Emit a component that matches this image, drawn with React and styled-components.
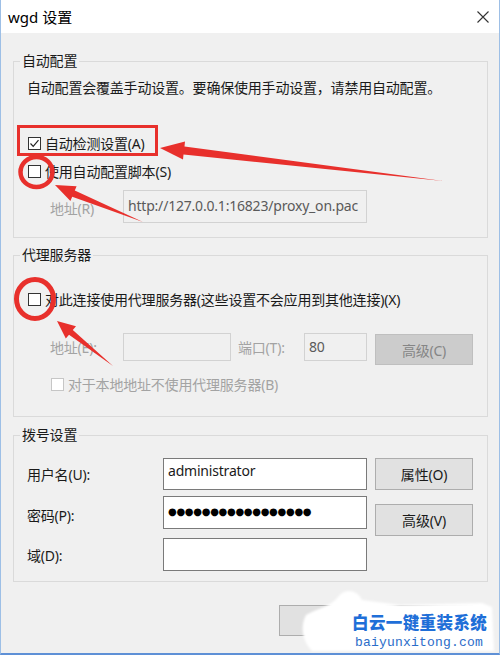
import React from "react";
import styled, { createGlobalStyle } from "styled-components";

const GlobalStyle = createGlobalStyle`
  html, body {
    margin: 0;
    padding: 0;
  }
  body {
    width: 500px;
    height: 655px;
    overflow: hidden;
    background: #fff;
    font-family: "Noto Sans", "Noto Sans CJK SC", sans-serif;
  }
`;

const Window = styled.div`
  position: relative;
  width: 500px;
  height: 655px;
  box-sizing: border-box;
  background: #f0f0f0;
  border: 1px solid #9dbfe6;
  border-top: none;
  border-bottom: 2px solid #5e90d6;
  display: flex;
  flex-direction: column;
  font-size: 14px;
  letter-spacing: -0.2px;
  color: #1a1a1a;
`;

const TitleBar = styled.div`
  height: 33px;
  flex-shrink: 0;
  background: #fff;
  display: flex;
  align-items: center;
  justify-content: space-between;
  padding: 0 10px 0 7px;
`;

const Title = styled.span`
  font-size: 15px;
  letter-spacing: 0;
  color: #000;
`;

const Body = styled.div`
  padding: 20px 11px 0 12px;
  display: flex;
  flex-direction: column;
`;

const Group = styled.fieldset`
  margin: ${(p) => p.$gap}px 0 0;
  padding: 0 10px ${(p) => p.$bottom}px 14px;
  border: 1px solid #dadada;
  min-width: 0;
  display: flex;
  flex-direction: column;
`;

const GroupLabel = styled.legend`
  margin-left: -8px;
  padding: 0 2px;
  line-height: 16px;
  font-size: 14px;
  color: #1a1a1a;
`;

const Note = styled.div`
  margin: 10px 0 0 -1px;
  line-height: 18px;
  color: #1a1a1a;
`;

const CheckRow = styled.div`
  display: flex;
  align-items: center;
  gap: 4px;
  height: 20px;
  margin-top: ${(p) => p.$top}px;
  margin-left: ${(p) => p.$indent || 0}px;
  color: ${(p) => (p.$disabled ? "#a3a3a3" : "#1a1a1a")};
`;

const Box = styled.span`
  width: 13px;
  height: 13px;
  flex-shrink: 0;
  box-sizing: border-box;
  border: 1px solid ${(p) => (p.$disabled ? "#c6c6c6" : "#333")};
  background: #fff;
  display: flex;
  align-items: center;
  justify-content: center;
`;

const FieldRow = styled.div`
  display: flex;
  align-items: ${(p) => p.$align || "center"};
  margin-top: ${(p) => p.$top}px;
  margin-left: ${(p) => p.$indent || 0}px;
`;

const FieldLabel = styled.span`
  width: ${(p) => p.$w}px;
  flex-shrink: 0;
  color: ${(p) => (p.$disabled ? "#a3a3a3" : "#1a1a1a")};
  margin-top: ${(p) => p.$shift || 0}px;
  margin-left: ${(p) => p.$lead || 0}px;
`;

const TextBox = styled.div`
  width: ${(p) => p.$w}px;
  height: ${(p) => p.$h}px;
  flex-shrink: 0;
  box-sizing: border-box;
  border: 1px solid ${(p) => (p.$disabled ? "#d2d2d2" : "#7a7a7a")};
  background: ${(p) => (p.$disabled ? "#f0f0f0" : "#fff")};
  color: ${(p) => (p.$disabled ? "#5a5a5a" : "#1a1a1a")};
  padding: ${(p) => p.$pad || "0 4px 2px"};
  display: flex;
  align-items: ${(p) => (p.$pad ? "flex-start" : "center")};
  white-space: nowrap;
  overflow: hidden;
`;

const Dots = styled.span`
  font-family: "DejaVu Sans", sans-serif;
  font-size: 10px;
  letter-spacing: -0.3px;
  color: #000;
`;

const PushButton = styled.div`
  width: ${(p) => p.$w || 98}px;
  height: ${(p) => p.$h || 32}px;
  flex-shrink: 0;
  box-sizing: border-box;
  margin-left: 8px;
  margin-top: ${(p) => p.$top || 0}px;
  border: 1px solid ${(p) => (p.$disabled ? "#bfbfbf" : "#adadad")};
  background: ${(p) => (p.$disabled ? "#cccccc" : "#e1e1e1")};
  color: ${(p) => (p.$disabled ? "#858585" : "#1a1a1a")};
  display: flex;
  align-items: center;
  justify-content: center;
`;

const Footer = styled.div`
  display: flex;
  justify-content: flex-end;
  margin-top: 23px;
  padding-right: 15px;
`;

const Overlay = styled.svg`
  position: absolute;
  left: -1px;
  top: 0;
  pointer-events: none;
`;

const Watermark = styled.div`
  position: absolute;
  left: 351px;
  top: 612px;
  display: flex;
  flex-direction: column;
  color: #1f6fd8;
  letter-spacing: 0;
`;

const MarkTitle = styled.span`
  font-family: "Noto Sans CJK SC", sans-serif;
  font-weight: 900;
  font-size: 16.5px;
  line-height: 21px;
  letter-spacing: 0.4px;
`;

const MarkUrl = styled.span`
  font-family: "Liberation Mono", monospace;
  font-size: 13px;
  line-height: 15px;
  letter-spacing: 0.2px;
  margin: 1.5px 0 0 3px;
  color: #2a6cc9;
`;

function Check({ checked, disabled }) {
  return (
    <Box $disabled={disabled}>
      {checked && (
        <svg width="11" height="11" viewBox="0 0 11 11">
          <polyline points="1.5,5.5 4.2,8.3 9.5,2.2" fill="none" stroke="#222" strokeWidth="1.2" />
        </svg>
      )}
    </Box>
  );
}

function Marks() {
  const red = "#e8302c";
  return (
    <Overlay width="500" height="655" viewBox="0 0 500 655">
      <defs>
        <filter id="soft" x="-10%" y="-10%" width="120%" height="120%">
          <feGaussianBlur stdDeviation="1.2" />
        </filter>
      </defs>
      <path
        d="M338 597 C344 588 357 589 362 600 L400 605 L482 603 L492 607 L494 651 L312 651 C302 641 300 626 306 615 C316 609 330 607 338 597 Z"
        fill="#fff"
        filter="url(#soft)"
      />
      <rect x="18.5" y="126.5" width="138" height="28" fill="none" stroke={red} strokeWidth="3" />
      <polygon
        points="160,148 185,141.5 184.5,146.5 443,181 183.5,154.5 183,159.5"
        fill={red}
      />
      <ellipse cx="36.5" cy="172" rx="16" ry="15" fill="none" stroke={red} strokeWidth="4.5" />
      <polygon
        points="55,185 76.6,186.2 74.8,190.4 143,222 72.2,196.8 70.4,201"
        fill={red}
      />
      <ellipse cx="35" cy="299" rx="18.5" ry="19.5" fill="none" stroke={red} strokeWidth="5" />
      <polygon
        points="57,321 76,326.2 72.8,330 113,366 69,334.7 65.8,338.6"
        fill={red}
      />
    </Overlay>
  );
}

export default function App() {
  return (
    <>
      <GlobalStyle />
      <Window>
        <TitleBar>
          <Title>wgd 设置</Title>
          <svg width="12" height="12" viewBox="0 0 12 12">
            <path d="M0.5 0.5 L11.5 11.5 M11.5 0.5 L0.5 11.5" stroke="#333" strokeWidth="1.1" />
          </svg>
        </TitleBar>

        <Body>
          <Group $gap={0} $bottom={14}>
            <GroupLabel>自动配置</GroupLabel>
            <Note>自动配置会覆盖手动设置。要确保使用手动设置，请禁用自动配置。</Note>
            <CheckRow $top={36}>
              <Check checked />
              自动检测设置(A)
            </CheckRow>
            <CheckRow $top={8}>
              <Check />
              使用自动配置脚本(S)
            </CheckRow>
            <FieldRow $top={9} $indent={22}>
              <FieldLabel $w={73} $disabled $shift={3}>
                地址(R)
              </FieldLabel>
              <TextBox $w={244} $h={33} $disabled>
                http://127.0.0.1:16823/proxy_on.pac
              </TextBox>
            </FieldRow>
          </Group>

          <Group $gap={9} $bottom={22}>
            <GroupLabel>代理服务器</GroupLabel>
            <CheckRow $top={26}>
              <Check />
              对此连接使用代理服务器(这些设置不会应用到其他连接)(X)
            </CheckRow>
            <FieldRow $top={24} $indent={22} $align="flex-start">
              <FieldLabel $w={73} $disabled $shift={4}>
                地址(E):
              </FieldLabel>
              <TextBox $w={108} $h={28} $disabled />
              <FieldLabel $w={66} $disabled $shift={4} $lead={7}>
                端口(T):
              </FieldLabel>
              <TextBox $w={63} $h={28} $disabled>
                80
              </TextBox>
              <PushButton $disabled $h={31} $top={1}>
                高级(C)
              </PushButton>
            </FieldRow>
            <CheckRow $top={9} $indent={23} $disabled>
              <Check disabled />
              对于本地地址不使用代理服务器(B)
            </CheckRow>
          </Group>

          <Group $gap={10} $bottom={10}>
            <GroupLabel>拨号设置</GroupLabel>
            <FieldRow $top={15} $indent={-1}>
              <FieldLabel $w={136}>用户名(U):</FieldLabel>
              <TextBox $w={204} $h={32} $pad="2px 4px 0">
                administrator
              </TextBox>
              <PushButton>属性(O)</PushButton>
            </FieldRow>
            <FieldRow $top={6} $indent={-1} $align="flex-start">
              <FieldLabel $w={136} $shift={9}>
                密码(P):
              </FieldLabel>
              <TextBox $w={204} $h={33}>
                <Dots>●●●●●●●●●●●●●●●●●</Dots>
              </TextBox>
              <PushButton $top={8}>高级(V)</PushButton>
            </FieldRow>
            <FieldRow $top={2} $indent={-1}>
              <FieldLabel $w={136}>域(D):</FieldLabel>
              <TextBox $w={204} $h={33} />
            </FieldRow>
          </Group>

          <Footer>
            <PushButton $w={93} $h={31} />
            <PushButton $w={93} $h={31} />
          </Footer>
        </Body>

        <Marks />
        <Watermark>
          <MarkTitle>白云一键重装系统</MarkTitle>
          <MarkUrl>baiyunxitong.com</MarkUrl>
        </Watermark>
      </Window>
    </>
  );
}
